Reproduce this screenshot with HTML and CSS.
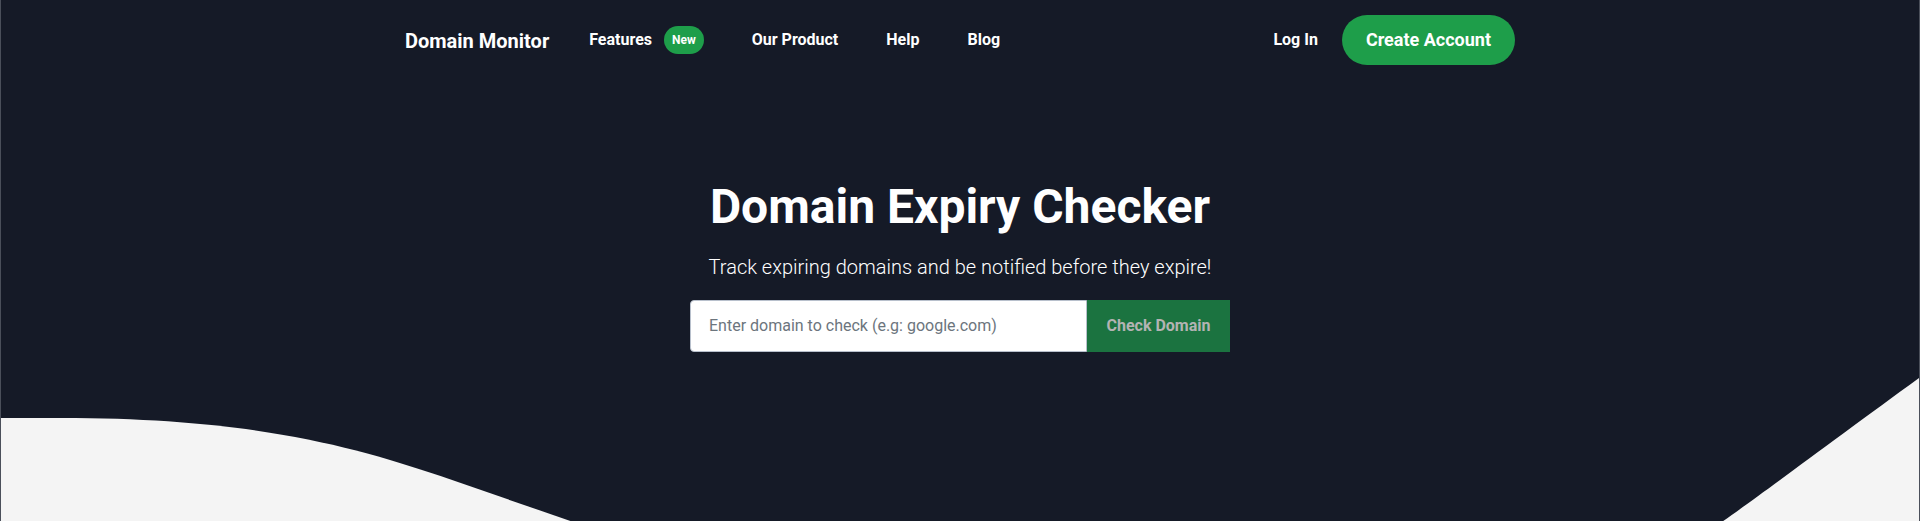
FILE: index.html
```html
<!DOCTYPE html>
<html lang="en">
<head>
  <meta charset="UTF-8" />
  <meta name="viewport" content="width=device-width, initial-scale=1.0"/>
  <title>Domain Expiry Checker</title>
  <link rel="stylesheet" href="styles.css">
</head>
<body>

  <header class="hero">
    <nav class="navbar">
      <a class="brand" href="#">Domain Monitor</a>
      <ul class="nav-links">
        <li><a href="#">Features</a><span class="badge">New</span></li>
        <li><a href="#">Our Product</a></li>
        <li><a href="#">Help</a></li>
        <li><a href="#">Blog</a></li>
      </ul>
      <div class="nav-actions">
        <a class="login" href="#">Log In</a>
        <a class="btn-create" href="#">Create Account</a>
      </div>
    </nav>

    <section class="intro">
      <h1>Domain Expiry Checker</h1>
      <p>Track expiring domains and be notified before they expire!</p>
      <form class="check-form" onsubmit="return false;">
        <input type="text" placeholder="Enter domain to check (e.g: google.com)" />
        <button type="submit" disabled>Check Domain</button>
      </form>
    </section>

    <!-- wave at the bottom of the hero -->
    <svg class="wave" viewBox="0 0 1920 145" preserveAspectRatio="none">
      <path d="M0 42 L60 42 C250 42 350 70 440 100 L570 145 L0 145 Z" fill="#f4f4f4"/>
      <path d="M1920 2 L1920 145 L1724 145 C1760 120 1840 60 1920 2 Z" fill="#f4f4f4"/>
    </svg>
  </header>

</body>
</html>
```

FILE: styles.css
```css
body {
  font-family: Roboto, "Liberation Sans", sans-serif;
  background: #f4f4f4;
  margin: 0;
  color: #fff;
}

a {
  color: #fff;
  text-decoration: none;
}

.hero {
  background: #151a27;
  border-left: 1px solid #4a4f5a;
  border-right: 1px solid #4a4f5a;
  height: 521px;
  overflow: hidden;
  display: flex;
  flex-direction: column;
}

.navbar {
  width: 1110px;
  margin: 0 auto;
  height: 79px;
  display: flex;
  align-items: center;
}

.brand {
  font-size: 20px;
  font-weight: 700;
  margin-right: 16px;
  padding-top: 2px;
}

.nav-links {
  list-style: none;
  display: flex;
  align-items: center;
  margin: 0;
  padding: 0;
  flex: 1;
}

.nav-links li {
  display: flex;
  align-items: center;
  padding: 0 24px;
}

.nav-links a {
  font-size: 16px;
  font-weight: 700;
}

.badge {
  background: #1e9e4a;
  font-size: 12px;
  font-weight: 700;
  height: 28px;
  line-height: 28px;
  padding: 0 8px;
  border-radius: 14px;
  margin-left: 12px;
}

.nav-actions {
  display: flex;
  align-items: center;
  gap: 24px;
}

.login {
  font-size: 16px;
  font-weight: 700;
}

.btn-create {
  background: #1e9e4a;
  font-size: 18px;
  font-weight: 700;
  height: 50px;
  line-height: 50px;
  padding: 0 24px;
  border-radius: 25px;
}

.intro {
  text-align: center;
  padding-top: 99px;
}

.intro h1 {
  font-size: 48px;
  font-weight: 700;
  line-height: 1.2;
  margin: 0;
}

.intro p {
  font-size: 20px;
  font-weight: 300;
  margin: 19px 0 21px;
}

.check-form {
  display: flex;
  justify-content: center;
}

.check-form input {
  width: 397px;
  height: 52px;
  box-sizing: border-box;
  padding: 0 18px;
  border: 1px solid #b8c0cc;
  border-radius: 4px 0 0 4px;
  font-family: inherit;
  font-size: 16px;
  color: #333;
}

.check-form input::placeholder {
  color: #6c757d;
}

.check-form button {
  width: 143px;
  height: 52px;
  background: #1b7340;
  color: #b3b3b3;
  border: none;
  font-family: inherit;
  font-size: 16px;
  font-weight: 700;
}

.wave {
  display: block;
  width: 100%;
  height: 145px;
  margin-top: auto;
  flex-shrink: 0;
}
```
